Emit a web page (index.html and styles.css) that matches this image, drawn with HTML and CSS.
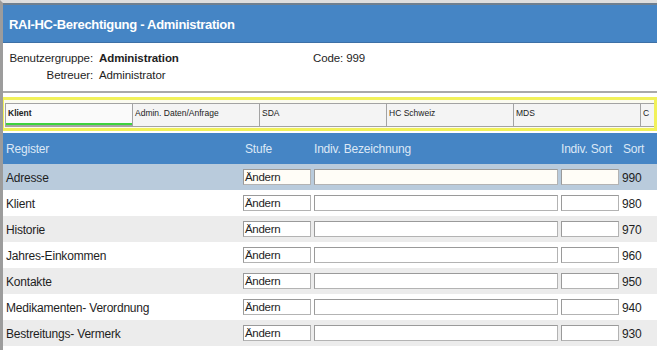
FILE: index.html
```html
<!DOCTYPE html>
<html lang="de">
<head>
    <meta charset="UTF-8">
    <title>RAI-HC-Berechtigung - Administration</title>
    <link rel="stylesheet" href="styles.css">
</head>
<body>
    <div class="window">
        <header class="title">RAI-HC-Berechtigung - Administration</header>

        <section class="info">
            <span class="label">Benutzergruppe:</span>
            <span class="value bold">Administration</span>
            <span class="code">Code: 999</span>
            <span class="label">Betreuer:</span>
            <span class="value">Administrator</span>
        </section>

        <nav class="tabs-wrap">
            <div class="tabs">
                <div class="tab active">Klient</div>
                <div class="tab">Admin. Daten/Anfrage</div>
                <div class="tab">SDA</div>
                <div class="tab">HC Schweiz</div>
                <div class="tab">MDS</div>
                <div class="tab">C</div>
            </div>
        </nav>

        <div class="grid-head">
            <span>Register</span>
            <span class="stufe-label">Stufe</span>
            <span>Indiv. Bezeichnung</span>
            <span>Indiv. Sort</span>
            <span class="sort-label">Sort</span>
        </div>

        <div class="rows">
            <div class="row selected">
                <span>Adresse</span>
                <div class="field">Ändern</div>
                <div class="field"></div>
                <div class="field"></div>
                <span>990</span>
            </div>
            <div class="row">
                <span>Klient</span>
                <div class="field">Ändern</div>
                <div class="field"></div>
                <div class="field"></div>
                <span>980</span>
            </div>
            <div class="row alt">
                <span>Historie</span>
                <div class="field">Ändern</div>
                <div class="field"></div>
                <div class="field"></div>
                <span>970</span>
            </div>
            <div class="row">
                <span>Jahres-Einkommen</span>
                <div class="field">Ändern</div>
                <div class="field"></div>
                <div class="field"></div>
                <span>960</span>
            </div>
            <div class="row alt">
                <span>Kontakte</span>
                <div class="field">Ändern</div>
                <div class="field"></div>
                <div class="field"></div>
                <span>950</span>
            </div>
            <div class="row">
                <span>Medikamenten- Verordnung</span>
                <div class="field">Ändern</div>
                <div class="field"></div>
                <div class="field"></div>
                <span>940</span>
            </div>
            <div class="row alt">
                <span>Bestreitungs- Vermerk</span>
                <div class="field">Ändern</div>
                <div class="field"></div>
                <div class="field"></div>
                <span>930</span>
            </div>
        </div>
    </div>
</body>
</html>
```

FILE: styles.css
```css
body {
    margin: 0;
    padding: 0;
    font-family: "Liberation Sans", Arial, sans-serif;
    color: #1e1e1e;
    background: #fff;
    height: 350px;
    overflow: hidden;
}

.window {
    border-left: 3px solid #9c9c9c;
    border-top: 3px solid #dedede;
    height: 347px;
    overflow: hidden;
}

/* blue title bar */
.title {
    height: 34px;
    padding-top: 3px;
    border-top: 2px solid #6f7f8f;
    border-bottom: 1px solid #3d70a6;
    background: #4585c5;
    color: #fff;
    font-weight: bold;
    font-size: 13px;
    letter-spacing: -0.3px;
    line-height: 34px;
    padding-left: 6px;
}

.info {
    height: 41px;
    padding-top: 7px;
    border-bottom: 2px solid #a9a9a9;
    display: grid;
    grid-template-columns: 90px 208px 1fr;
    column-gap: 6px;
    grid-auto-rows: 17px;
    font-size: 11.5px;
    letter-spacing: -0.1px;
    line-height: 17px;
}

.info .label {
    text-align: right;
}

.info .bold {
    font-weight: bold;
}

.info .code {
    grid-row: span 2;
}

/* yellow framed tab strip */
.tabs-wrap {
    margin-top: 4px;
    margin-left: -2px;
    height: 28px;
    border: 3px solid #f1f15a;
    background: #fbfbf0;
    overflow: hidden;
}

.tabs {
    display: flex;
    padding: 3px 0 0 1px;
}

.tab {
    flex: 0 0 128px;
    box-sizing: border-box;
    height: 24px;
    border: 1px solid #a3a3a3;
    margin-right: -1px;
    background: #f4f4f4;
    font-size: 8.5px;
    line-height: 18px;
    padding-left: 2px;
    color: #222;
}

.tab.active {
    font-weight: bold;
    background: #fafafa;
    border-bottom: 2px solid #a3a3a3;
    box-shadow: inset 0 -2px 0 #3ed23e;
}

.grid-head,
.row {
    display: grid;
    grid-template-columns: 234px 68px 244px 58px 1fr;
    column-gap: 3px;
    padding-left: 3px;
    align-items: center;
    font-size: 12px;
    letter-spacing: -0.2px;
}

.grid-head {
    margin-top: 2px;
    height: 31px;
    background: #4585c5;
    color: #dce8f6;
}

.grid-head .stufe-label {
    padding-left: 2px;
}

.grid-head .sort-label {
    padding-left: 1px;
}

.row {
    height: 26px;
    padding-top: 2px;
    box-sizing: border-box;
}

.row.selected {
    background: #b9cbdc;
}

.row.alt {
    background: #ececec;
}

.field {
    box-sizing: border-box;
    height: 16px;
    margin-top: -2px;
    background: #fff;
    border: 1px solid #b3b3b3;
    border-top-color: #9a9a9a;
    border-left-color: #9a9a9a;
    font-size: 11.5px;
    letter-spacing: -0.3px;
    line-height: 14px;
    padding-left: 1px;
}

.row.selected .field {
    background: #fffdf7;
}
```
